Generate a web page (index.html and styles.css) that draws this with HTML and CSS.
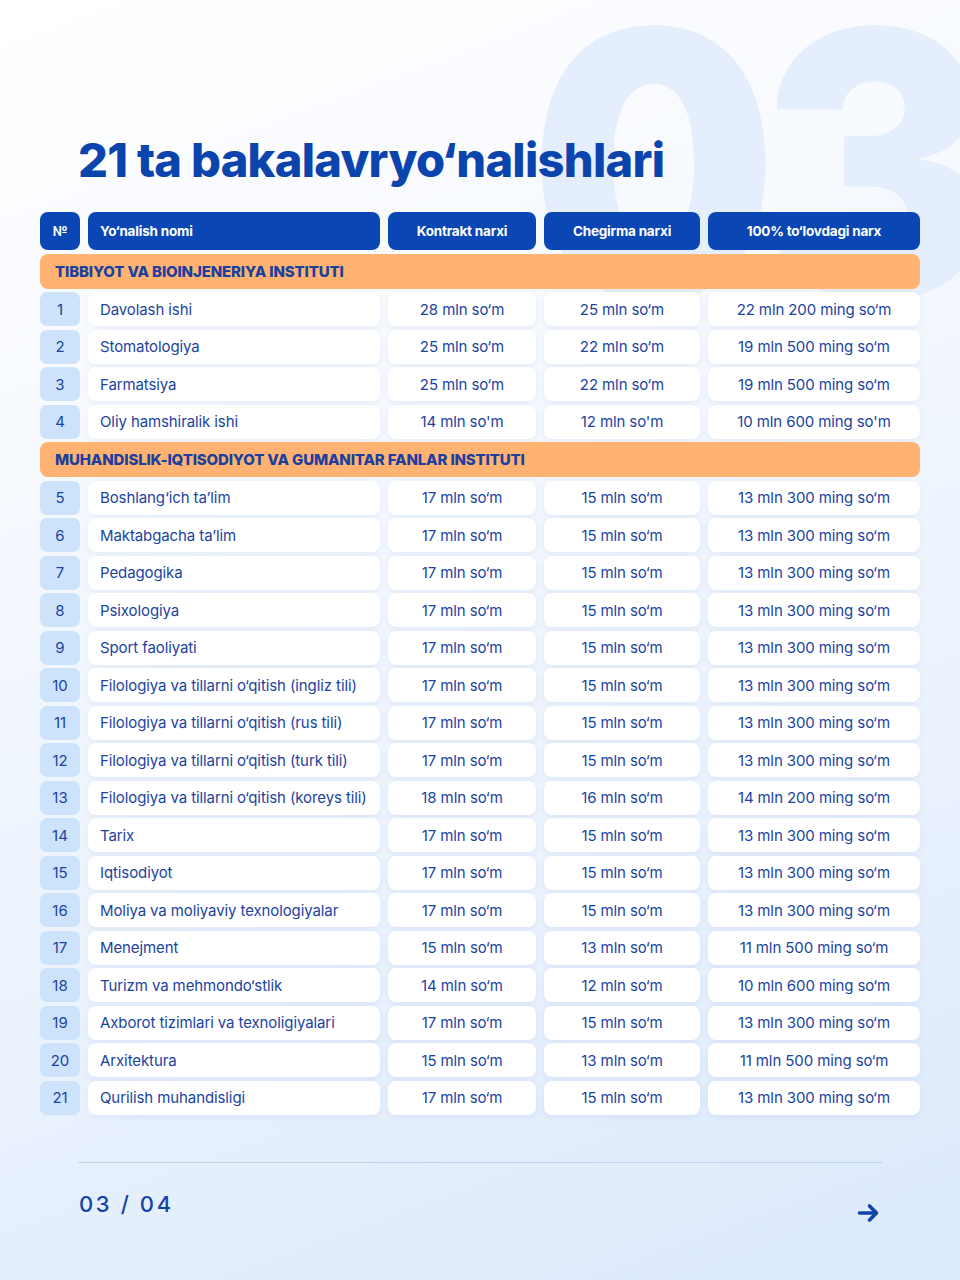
FILE: index.html
```html
<!DOCTYPE html>
<html lang="uz">
<head>
<meta charset="utf-8">
<title>21 ta bakalavr yo‘nalishlari</title>
<link rel="stylesheet" href="styles.css">
</head>
<body>
<div class="page">
  <div class="watermark" aria-hidden="true">03</div>
  <h1 class="title">21 ta bakalavryo‘nalishlari</h1>

  <div class="table">
    <div class="hcell c-num">№</div>
    <div class="hcell c-name">Yo‘nalish nomi</div>
    <div class="hcell">Kontrakt narxi</div>
    <div class="hcell">Chegirma narxi</div>
    <div class="hcell">100% to‘lovdagi narx</div>

    <div class="section">TIBBIYOT VA BIOINJENERIYA INSTITUTI</div>

    <div class="num">1</div><div class="cell name">Davolash ishi</div><div class="cell">28 mln so‘m</div><div class="cell">25 mln so‘m</div><div class="cell">22 mln 200 ming so‘m</div>
    <div class="num">2</div><div class="cell name">Stomatologiya</div><div class="cell">25 mln so‘m</div><div class="cell">22 mln so‘m</div><div class="cell">19 mln 500 ming so‘m</div>
    <div class="num">3</div><div class="cell name">Farmatsiya</div><div class="cell">25 mln so‘m</div><div class="cell">22 mln so‘m</div><div class="cell">19 mln 500 ming so‘m</div>
    <div class="num">4</div><div class="cell name">Oliy hamshiralik ishi</div><div class="cell">14 mln so'm</div><div class="cell">12 mln so'm</div><div class="cell">10 mln 600 ming so'm</div>

    <div class="section">MUHANDISLIK-IQTISODIYOT VA GUMANITAR FANLAR INSTITUTI</div>

    <div class="num">5</div><div class="cell name">Boshlang‘ich ta’lim</div><div class="cell">17 mln so‘m</div><div class="cell">15 mln so‘m</div><div class="cell">13 mln 300 ming so‘m</div>
    <div class="num">6</div><div class="cell name">Maktabgacha ta’lim</div><div class="cell">17 mln so‘m</div><div class="cell">15 mln so‘m</div><div class="cell">13 mln 300 ming so‘m</div>
    <div class="num">7</div><div class="cell name">Pedagogika</div><div class="cell">17 mln so‘m</div><div class="cell">15 mln so‘m</div><div class="cell">13 mln 300 ming so‘m</div>
    <div class="num">8</div><div class="cell name">Psixologiya</div><div class="cell">17 mln so‘m</div><div class="cell">15 mln so‘m</div><div class="cell">13 mln 300 ming so‘m</div>
    <div class="num">9</div><div class="cell name">Sport faoliyati</div><div class="cell">17 mln so‘m</div><div class="cell">15 mln so‘m</div><div class="cell">13 mln 300 ming so‘m</div>
    <div class="num">10</div><div class="cell name">Filologiya va tillarni o‘qitish (ingliz tili)</div><div class="cell">17 mln so‘m</div><div class="cell">15 mln so‘m</div><div class="cell">13 mln 300 ming so‘m</div>
    <div class="num">11</div><div class="cell name">Filologiya va tillarni o‘qitish (rus tili)</div><div class="cell">17 mln so‘m</div><div class="cell">15 mln so‘m</div><div class="cell">13 mln 300 ming so‘m</div>
    <div class="num">12</div><div class="cell name">Filologiya va tillarni o‘qitish (turk tili)</div><div class="cell">17 mln so‘m</div><div class="cell">15 mln so‘m</div><div class="cell">13 mln 300 ming so‘m</div>
    <div class="num">13</div><div class="cell name">Filologiya va tillarni o‘qitish (koreys tili)</div><div class="cell">18 mln so‘m</div><div class="cell">16 mln so‘m</div><div class="cell">14 mln 200 ming so‘m</div>
    <div class="num">14</div><div class="cell name">Tarix</div><div class="cell">17 mln so‘m</div><div class="cell">15 mln so‘m</div><div class="cell">13 mln 300 ming so‘m</div>
    <div class="num">15</div><div class="cell name">Iqtisodiyot</div><div class="cell">17 mln so‘m</div><div class="cell">15 mln so‘m</div><div class="cell">13 mln 300 ming so‘m</div>
    <div class="num">16</div><div class="cell name">Moliya va moliyaviy texnologiyalar</div><div class="cell">17 mln so‘m</div><div class="cell">15 mln so‘m</div><div class="cell">13 mln 300 ming so‘m</div>
    <div class="num">17</div><div class="cell name">Menejment</div><div class="cell">15 mln so‘m</div><div class="cell">13 mln so‘m</div><div class="cell">11 mln 500 ming so‘m</div>
    <div class="num">18</div><div class="cell name">Turizm va mehmondo‘stlik</div><div class="cell">14 mln so‘m</div><div class="cell">12 mln so‘m</div><div class="cell">10 mln 600 ming so‘m</div>
    <div class="num">19</div><div class="cell name">Axborot tizimlari va texnoligiyalari</div><div class="cell">17 mln so‘m</div><div class="cell">15 mln so‘m</div><div class="cell">13 mln 300 ming so‘m</div>
    <div class="num">20</div><div class="cell name">Arxitektura</div><div class="cell">15 mln so‘m</div><div class="cell">13 mln so‘m</div><div class="cell">11 mln 500 ming so‘m</div>
    <div class="num">21</div><div class="cell name">Qurilish muhandisligi</div><div class="cell">17 mln so‘m</div><div class="cell">15 mln so‘m</div><div class="cell">13 mln 300 ming so‘m</div>
  </div>

  <footer class="footer">
    <div class="pager">03 / 04</div>
    <svg class="arrow" width="24" height="20" viewBox="0 0 24 20" aria-hidden="true">
      <path d="M2.5 10 H19.5 M12.5 3 L19.5 10 L12.5 17" fill="none" stroke="#1443a8" stroke-width="3.6" stroke-linecap="round" stroke-linejoin="round"/>
    </svg>
  </footer>
</div>
</body>
</html>
```

FILE: styles.css
```css
* { box-sizing: border-box; }
html, body { margin: 0; padding: 0; }
body {
  width: 960px;
  height: 1280px;
  overflow: hidden;
  font-family: Inter, "Noto Sans", "Liberation Sans", sans-serif;
  color: #1b449f;
  background: linear-gradient(160deg, #ffffff 0%, #f6f9fe 30%, #eaf2fd 65%, #dbe9fb 100%);
}
.page {
  position: relative;
  width: 960px;
  height: 1280px;
  overflow: hidden;
  padding: 132px 40px 0;
}
.watermark {
  position: absolute;
  left: 530px;
  top: -21px;
  font-size: 370px;
  line-height: 1;
  font-weight: 900;
  letter-spacing: -19px;
  color: #e4eefc;
  transform: scaleX(0.94);
  transform-origin: left top;
  z-index: 0;
  pointer-events: none;
}
.title {
  position: relative;
  z-index: 1;
  margin: 0 0 24px 38px;
  font-size: 47px;
  line-height: 56px;
  font-weight: 800;
  letter-spacing: -0.7px;
  color: #0b44ad;
}
.table {
  position: relative;
  z-index: 1;
  display: grid;
  grid-template-columns: 40px 292px 148px 156px 212px;
  grid-template-rows: 38px 35px repeat(4, 34px) 35px repeat(17, 34px);
  column-gap: 8px;
  row-gap: 3.5px;
}
.hcell {
  background: #0b47b4;
  border-radius: 8px;
  color: #fff;
  font-size: 13.5px;
  font-weight: 700;
  letter-spacing: -0.2px;
  display: flex;
  align-items: center;
  justify-content: center;
}
.hcell.c-name { justify-content: flex-start; padding-left: 12px; }
.section {
  grid-column: 1 / -1;
  background: #ffb271;
  border-radius: 8px;
  font-size: 15px;
  font-weight: 800;
  letter-spacing: -0.15px;
  color: #1a3f9e;
  display: flex;
  align-items: center;
  padding-left: 15px;
}
.num {
  background: #cde3fb;
  border-radius: 7px;
  display: flex;
  align-items: center;
  justify-content: center;
  font-size: 15px;
  color: #1b449f;
}
.cell {
  background: #ffffff;
  border-radius: 8px;
  box-shadow: 0 2px 6px rgba(40, 90, 170, 0.07);
  display: flex;
  align-items: center;
  justify-content: center;
  font-size: 15px;
  letter-spacing: -0.1px;
  color: #1b449f;
  white-space: nowrap;
}
.cell.name { justify-content: flex-start; padding-left: 12px; }
.footer {
  position: relative;
  z-index: 1;
  margin: 47px 38px 0;
  border-top: 1px solid #bfd2ef;
  padding-top: 27px;
  display: flex;
  justify-content: space-between;
  align-items: flex-start;
}
.pager {
  font-size: 22px;
  line-height: 28px;
  letter-spacing: 2.6px;
  font-weight: 500;
  color: #1443a8;
  padding-left: 1px;
}
.arrow { margin-top: 13px; margin-right: 1px; }
```
